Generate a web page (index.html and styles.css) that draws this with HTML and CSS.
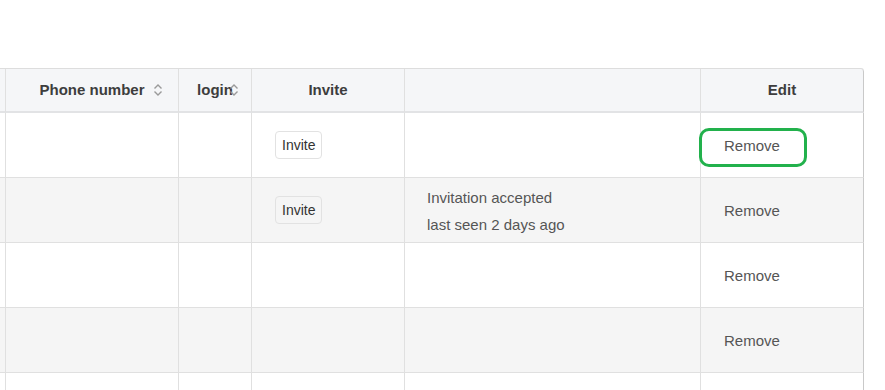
FILE: index.html
```html
<!DOCTYPE html>
<html lang="en">
<head>
<meta charset="utf-8">
<title>Members</title>
<link rel="stylesheet" href="styles.css">
</head>
<body>
<div class="viewport">
  <div class="grid" role="table">
    <div class="row head" role="row">
      <div class="cell" role="columnheader"></div>
      <div class="cell" role="columnheader"><span class="label">Phone number<svg class="sort sort-phone" viewBox="0 0 10 14" width="10" height="14"><path d="M1.5 5.5 L5 2 L8.5 5.5 M1.5 8.5 L5 12 L8.5 8.5"/></svg></span></div>
      <div class="cell" role="columnheader"><span class="label">login<svg class="sort sort-login" viewBox="0 0 10 14" width="10" height="14"><path d="M1.5 5.5 L5 2 L8.5 5.5 M1.5 8.5 L5 12 L8.5 8.5"/></svg></span></div>
      <div class="cell" role="columnheader">Invite</div>
      <div class="cell" role="columnheader"></div>
      <div class="cell" role="columnheader">Edit</div>
    </div>
    <div class="row" role="row">
      <div class="cell"></div>
      <div class="cell"></div>
      <div class="cell"></div>
      <div class="cell pad"><button class="btn">Invite</button></div>
      <div class="cell pad"></div>
      <div class="cell pad edit"><span class="link">Remove</span><span class="mark"></span></div>
    </div>
    <div class="row alt" role="row">
      <div class="cell"></div>
      <div class="cell"></div>
      <div class="cell"></div>
      <div class="cell pad"><button class="btn">Invite</button></div>
      <div class="cell pad status"><div>Invitation accepted</div><div>last seen 2 days ago</div></div>
      <div class="cell pad edit"><span class="link">Remove</span></div>
    </div>
    <div class="row" role="row">
      <div class="cell"></div>
      <div class="cell"></div>
      <div class="cell"></div>
      <div class="cell pad"></div>
      <div class="cell pad"></div>
      <div class="cell pad edit"><span class="link">Remove</span></div>
    </div>
    <div class="row alt" role="row">
      <div class="cell"></div>
      <div class="cell"></div>
      <div class="cell"></div>
      <div class="cell pad"></div>
      <div class="cell pad"></div>
      <div class="cell pad edit"><span class="link">Remove</span></div>
    </div>
    <div class="row" role="row">
      <div class="cell"></div>
      <div class="cell"></div>
      <div class="cell"></div>
      <div class="cell pad"></div>
      <div class="cell pad"></div>
      <div class="cell pad edit"></div>
    </div>
  </div>
</div>
</body>
</html>
```
FILE: styles.css
```css
html, body {
  margin: 0;
  padding: 0;
  background: #ffffff;
}
body {
  font-family: "Liberation Sans", Arial, sans-serif;
  font-size: 15px;
  color: #555555;
  overflow: hidden;
}
.viewport {
  width: 885px;
  height: 390px;
  overflow: hidden;
  padding-top: 68px;
  box-sizing: border-box;
}
.grid {
  display: grid;
  grid-template-columns: 101px 173px 73px 153px 296px 163px;
  margin-left: -95px;
  width: max-content;
  border-top: 1px solid #dddddd;
  border-top-right-radius: 3px;
}
.row {
  display: contents;
}
.cell {
  box-sizing: border-box;
  height: 65px;
  border-right: 1px solid #e0e0e0;
  border-bottom: 1px solid #e0e0e0;
  background: #ffffff;
  display: flex;
  align-items: center;
}
.cell:last-child {
  border-right-color: #c9c9c9;
}
.row.alt > .cell {
  background: #f5f5f5;
}
.row.head > .cell {
  height: 44px;
  background: #f5f6f8;
  border-bottom: 2px solid #e2e3e5;
  justify-content: center;
  font-weight: bold;
  color: #3d3d3d;
  font-size: 15px;
  padding-bottom: 1px;
}
.row.head > .cell:last-child {
  border-top-right-radius: 3px;
}
.label {
  position: relative;
  display: inline-block;
}
.sort {
  position: absolute;
  top: 2px;
  fill: none;
  stroke: #9a9a9a;
  stroke-width: 1.4;
}
.sort-phone {
  left: calc(100% + 8px);
}
.sort-login {
  left: calc(100% - 4px);
}
.pad {
  padding-left: 23px;
}
.btn {
  font-family: "Liberation Sans", Arial, sans-serif;
  font-size: 14px;
  color: #333333;
  background: transparent;
  border: 1px solid #e2e2e2;
  border-radius: 4px;
  height: 28px;
  padding: 0 6px;
  margin: 0;
  cursor: pointer;
}
.status {
  flex-direction: column;
  align-items: flex-start;
  justify-content: center;
  line-height: 27px;
  padding-left: 22px;
  padding-top: 1px;
}
.edit {
  position: relative;
}
.link {
  color: #555555;
  padding-top: 1px;
}
.mark {
  position: absolute;
  left: -2px;
  top: 15px;
  width: 108px;
  height: 39px;
  box-sizing: border-box;
  border: 3px solid #22b14c;
  border-radius: 10px;
}
```
